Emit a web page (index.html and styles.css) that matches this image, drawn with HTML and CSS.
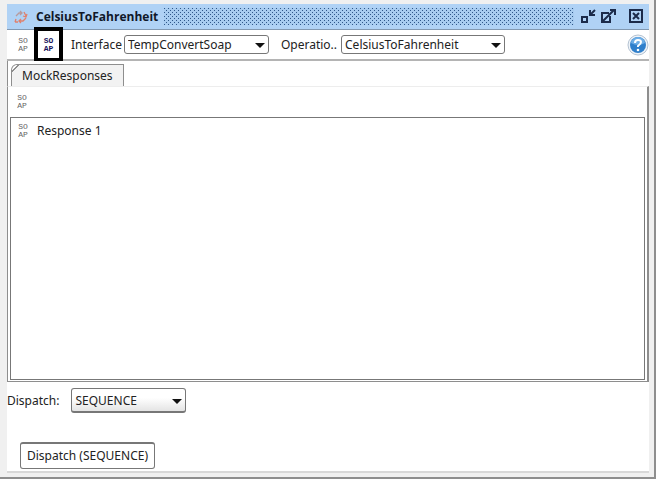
FILE: index.html
```html
<!DOCTYPE html>
<html lang="en">
<head>
    <meta charset="UTF-8">
    <meta name="viewport" content="width=device-width, initial-scale=1.0">
    <title>CelsiusToFahrenheit</title>
    <link rel="stylesheet" href="styles.css">
</head>
<body>
    <div class="window">
        <header class="titlebar">
            <svg class="title-icon" width="14" height="14" viewBox="0 0 14 14" fill="none" stroke-width="1.3">
                <path d="M2 6l3-3h3M6 1l2 2-2 2" stroke="#b89a9c" />
                <path d="M10 2l2 4M13 4l-1 3-3-1M4 12H1M2 9l-1 3M5 11h4l3-3M7 9l-2 2 2 2" stroke="#e0806c" />
            </svg>
            <h1>CelsiusToFahrenheit</h1>
            <svg class="grip" height="17" aria-hidden="true">
                <defs>
                    <pattern id="dots" width="4" height="4" patternUnits="userSpaceOnUse">
                        <path d="M0 0h1v1H0zM2 2h1v1H2z" fill="#2f578a" />
                    </pattern>
                </defs>
                <rect width="100%" height="100%" fill="url(#dots)" />
            </svg>
            <button class="win-btn" aria-label="Minimize">
                <svg width="16" height="16" viewBox="0 0 16 16" fill="none" stroke="#1c2b4a" stroke-width="2">
                    <path d="M2 8h5v5H2z" />
                    <path d="M15 1l-4 4M10 1v5h5" />
                </svg>
            </button>
            <button class="win-btn" aria-label="Maximize">
                <svg width="16" height="16" viewBox="0 0 16 16" fill="none" stroke="#1c2b4a" stroke-width="2">
                    <path d="M9 4H2v9h8V7" />
                    <path d="M3 12 14 1M10 1h5v5" />
                </svg>
            </button>
            <button class="win-btn win-close" aria-label="Close">
                <svg width="16" height="16" viewBox="0 0 16 16" fill="none" stroke="#1c2b4a" stroke-width="2">
                    <path d="M2 1h12v12H2z" />
                    <path d="M5 4l6 6M11 4l-6 6" />
                </svg>
            </button>
        </header>

        <div class="toolbar">
            <button class="soap" aria-label="New response">SO<br>AP</button>
            <button class="soap soap-marked" aria-label="Open request">SO<br>AP</button>
            <label class="interface-label" for="interface">Interface</label>
            <span class="combo combo-interface">
                <select id="interface"><option>TempConvertSoap</option></select>
            </span>
            <label class="operation-label" for="operation">Operatio..</label>
            <span class="combo combo-operation">
                <select id="operation"><option>CelsiusToFahrenheit</option></select>
            </span>
            <button class="help" aria-label="Help">
                <svg width="22" height="22" viewBox="0 0 22 22">
                    <circle cx="11" cy="11" r="10" fill="#eef3f8" stroke="#b5c3d2" />
                    <circle cx="11" cy="11" r="8" fill="#2f7fcb" />
                    <path d="M4 9a7 6 0 0 1 14 0q-7 4-14 0z" fill="#6eaee6" />
                    <path d="M8 9q0-3 3-3t3 2q0 2-3 4v1" fill="none" stroke="#fff" stroke-width="2" />
                    <circle cx="11" cy="16" r="1.3" fill="#fff" />
                </svg>
            </button>
        </div>

        <main class="content">
            <div class="tabs">
                <button class="tab">MockResponses</button>
            </div>
            <section class="panel">
                <div class="panel-tools">
                    <button class="soap" aria-label="Add response">SO<br>AP</button>
                </div>
                <ul class="responses">
                    <li><span class="soap" aria-hidden="true">SO<br>AP</span>Response 1</li>
                </ul>
            </section>
            <div class="dispatch">
                <label for="dispatch">Dispatch:</label>
                <span class="combo combo-dispatch">
                    <select id="dispatch"><option>SEQUENCE</option></select>
                </span>
            </div>
            <button class="dispatch-btn">Dispatch (SEQUENCE)</button>
        </main>
    </div>
</body>
</html>
```
FILE: styles.css
```css
* { box-sizing: border-box; }
body {
    margin: 0;
    padding: 0 4px 3px 0;
    min-height: 100vh;
    display: flex;
    background: #fff;
    color: #222;
    font-family: "Noto Sans", "Open Sans", sans-serif;
    font-size: 12px;
    line-height: 18px;
}
button, select {
    margin: 0;
    padding: 0;
    border: none;
    background: none;
    color: inherit;
    font: inherit;
}
svg { display: block; }
.window {
    flex: 1;
    display: flex;
    flex-direction: column;
    padding: 4px 5px 4px 7px;
    background: #f0f0f0;
    border-right: 2px solid #8e8e8e;
    border-bottom: 2px solid #8e8e8e;
}

/* title bar */
.titlebar {
    display: flex;
    align-items: center;
    height: 26px;
    padding: 0 5px 0 7px;
    background: #b0d2f5;
    border-bottom: 1px solid #8298b0;
}
h1 {
    margin: 0 6px 0 8px;
    color: #101828;
    font-family: "Open Sans", sans-serif;
    font-size: 12px;
    font-weight: bold;
}
.grip {
    flex: 1;
    min-width: 0;
    margin-right: 6px;
    background: #a8ccf0;
}
.win-btn { margin-right: 4px; }
.win-close { margin: 0 0 0 8px; }

/* toolbar */
.toolbar {
    display: flex;
    align-items: center;
    height: 31px;
    padding-left: 8px;
    background: #fff;
    border-bottom: 2px solid #b4b4b4;
}
.soap {
    width: 16px;
    color: #666;
    font-family: "Liberation Mono", monospace;
    font-size: 8px;
    line-height: 8px;
    text-align: center;
}
.soap-marked {
    width: 29px;
    height: 35px;
    margin-left: 3px;
    border: 4px solid #000;
    color: #17135c;
    font-weight: bold;
}
.interface-label { margin: 0 2px 0 8px; }
.operation-label { margin: 0 4px 0 12px; }
.combo {
    position: relative;
    display: flex;
}
.combo::after {
    content: "";
    position: absolute;
    right: 4px;
    top: 50%;
    margin-top: -2px;
    border: 5px solid transparent;
    border-top-color: #111;
    border-bottom: none;
    pointer-events: none;
}
.combo select {
    appearance: none;
    width: 100%;
    height: 19px;
    padding: 0 16px 0 3px;
    background: #fff;
    border: 1px solid #777;
    border-radius: 3px;
    line-height: 17px;
}
.combo-interface { width: 145px; }
.combo-operation { width: 164px; }
.help { margin-left: auto; }

/* responses */
.content {
    flex: 1;
    display: flex;
    flex-direction: column;
    background: #fff;
    border-bottom: 2px solid #d8d8d8;
}
.tabs {
    padding: 3px 3px 0;
    border-left: 1px solid #8e8e8e;
}
.tab {
    display: block;
    height: 22px;
    padding: 0 10px;
    background: linear-gradient(135deg, #fff 4px, #8e8e8e 4px, #8e8e8e 5px, #f2f2f2 5px);
    border: 1px solid #8e8e8e;
    border-bottom: none;
    border-top-left-radius: 6px;
}
.panel {
    flex: 1;
    display: flex;
    flex-direction: column;
    padding: 0 2px 1px 2px;
    border: 1px solid #8e8e8e;
    border-top-color: #ededed;
    border-right-width: 2px;
}
.panel-tools {
    display: flex;
    align-items: center;
    height: 30px;
    padding-left: 4px;
}
.responses {
    flex: 1;
    margin: 0;
    padding: 4px;
    border: 1px solid #777;
    list-style: none;
}
.responses li {
    display: flex;
    align-items: center;
    gap: 6px;
}

/* dispatch */
.dispatch {
    display: flex;
    align-items: center;
    gap: 12px;
    margin-top: 6px;
}
.combo-dispatch { width: 115px; }
.combo-dispatch select {
    height: 25px;
    background: linear-gradient(#fff 40%, #e4e4e4);
    border-bottom-width: 2px;
}
.dispatch-btn {
    align-self: flex-start;
    height: 27px;
    margin: 29px 0 2px 13px;
    padding: 0 6px;
    background: #fff;
    border: 1px solid #777;
    border-top-width: 2px;
    border-radius: 3px;
}
```
